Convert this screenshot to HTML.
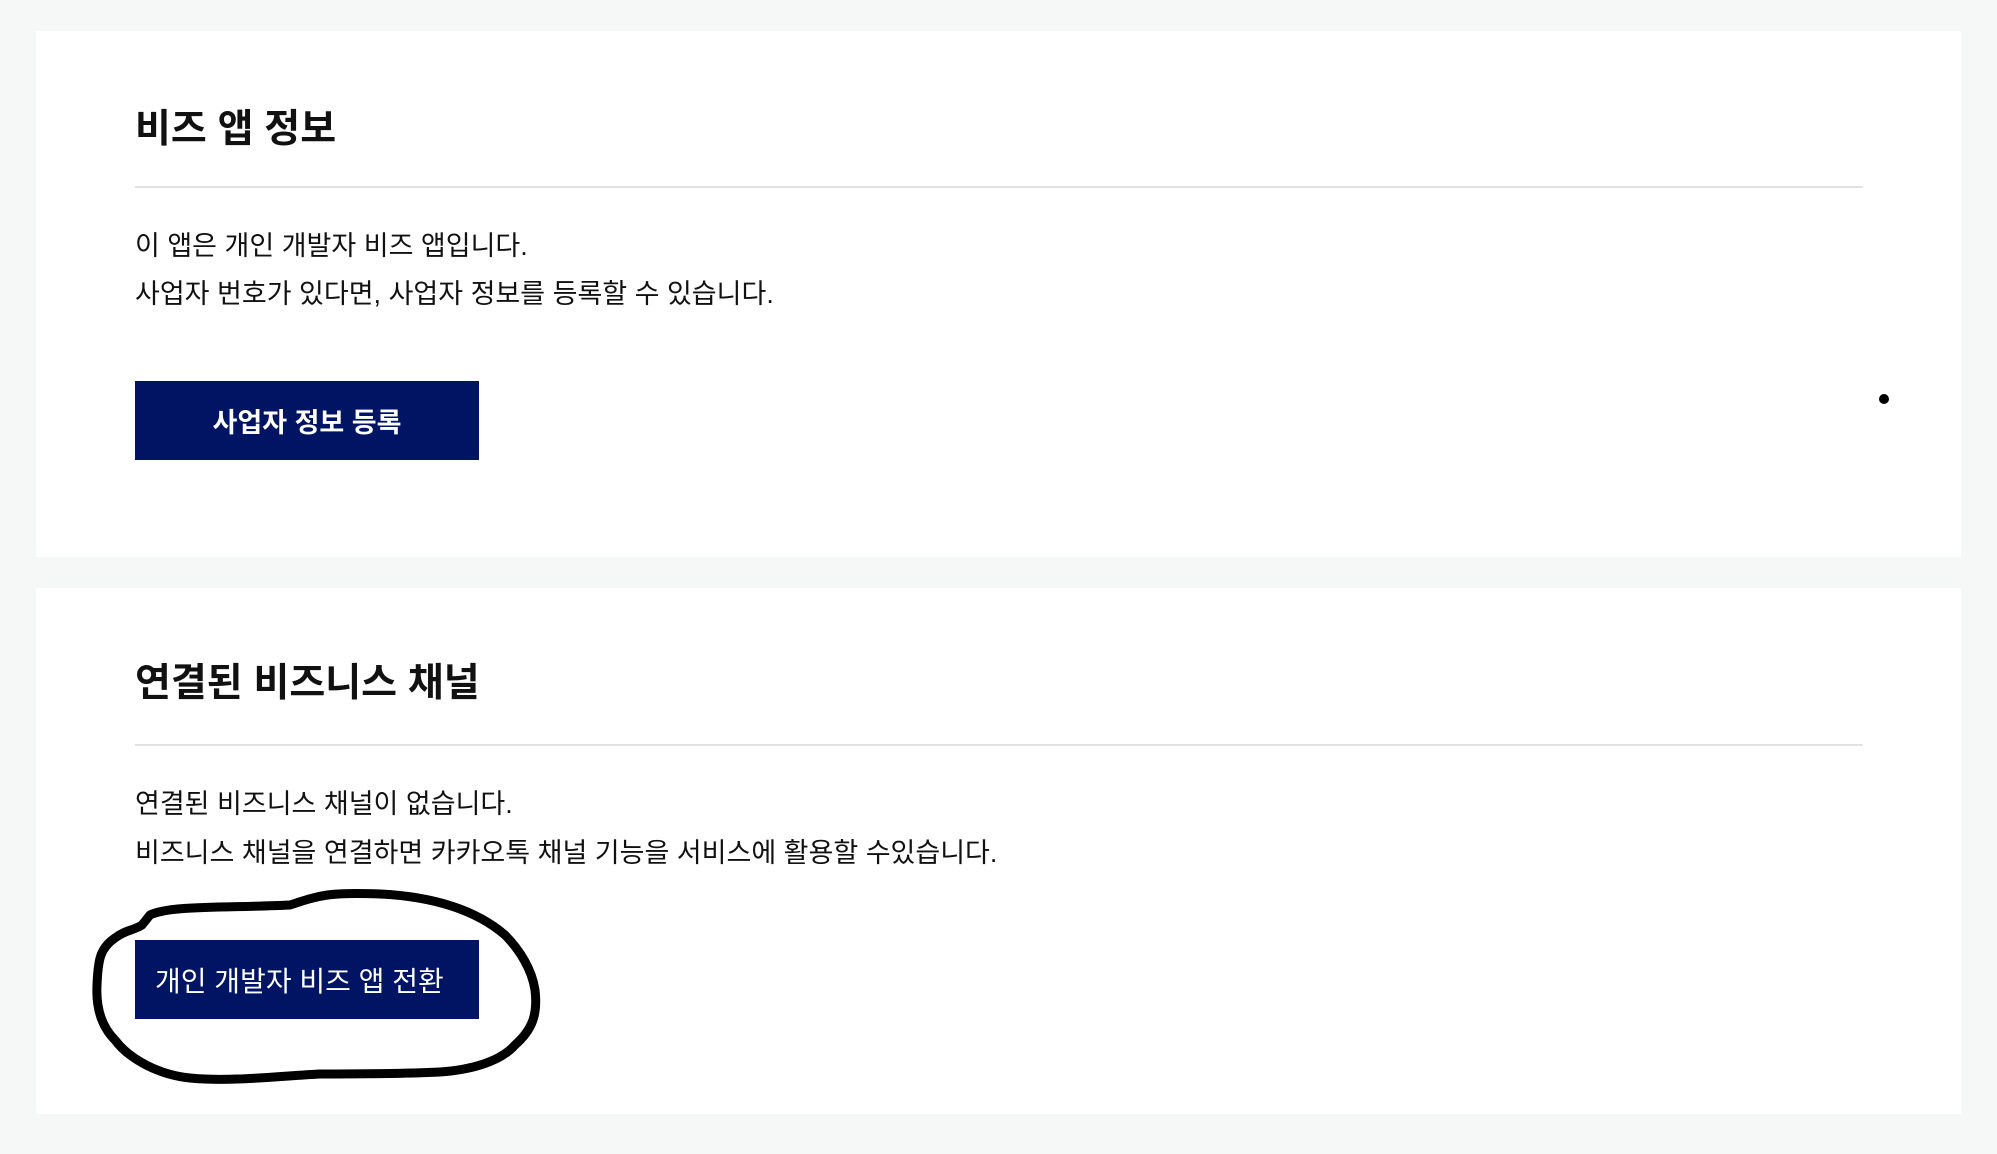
<!DOCTYPE html>
<html><head><meta charset="utf-8"><style>
body{margin:0;width:1997px;height:1154px;background:#f6f7f7;font-family:"Liberation Sans","Noto Sans CJK KR",sans-serif;position:relative;overflow:hidden;color:#111}
.card{position:absolute;left:36px;width:1925px;background:#fff}
.h{position:absolute;left:99px;font-size:39px;font-weight:bold;line-height:1;margin:0}
.hr{position:absolute;left:99px;width:1728px;height:2px;background:#e2e2e2}
.p{position:absolute;left:99px;font-size:27px;line-height:1}
.btn{position:absolute;left:99px;width:344px;height:79px;background:#001464;color:#fff;font-size:28px;display:flex;align-items:center}
</style></head><body>
<div class="card" style="top:31px;height:526px">
  <div class="h" style="top:79px">비즈 앱 정보</div>
  <div class="hr" style="top:155px"></div>
  <div class="p" style="top:202px">이 앱은 개인 개발자 비즈 앱입니다.</div>
  <div class="p" style="top:250px">사업자 번호가 있다면, 사업자 정보를 등록할 수 있습니다.</div>
  <div class="btn" style="top:350px;justify-content:center;font-weight:bold;font-size:27px">사업자 정보 등록</div>
  <div style="position:absolute;left:1843px;top:363px;width:10px;height:10px;border-radius:50%;background:#000"></div>
</div>
<div class="card" style="top:588px;height:526px">
  <div class="h" style="top:76px">연결된 비즈니스 채널</div>
  <div class="hr" style="top:156px"></div>
  <div class="p" style="top:203px">연결된 비즈니스 채널이 없습니다.</div>
  <div class="p" style="top:252px">비즈니스 채널을 연결하면 카카오톡 채널 기능을 서비스에 활용할 수있습니다.</div>
  <div class="btn" style="top:352px;padding-left:20px;box-sizing:border-box">개인 개발자 비즈 앱 전환</div>
</div>
<svg style="position:absolute;left:0;top:0" width="1997" height="1154">
<path d="M150 915 C170 905 230 908 290 905 C320 895 330 892 380 894 C420 896 470 905 505 935 C520 950 532 970 535 990 C538 1015 532 1030 515 1045 C500 1062 470 1070 440 1072 C400 1074 360 1074 320 1074 C280 1076 230 1082 190 1078 C160 1075 130 1060 115 1040 C100 1025 96 1005 97 985 C98 960 100 948 115 938 C125 930 135 930 142 925 L150 915" fill="none" stroke="#000" stroke-width="9" stroke-linejoin="round" stroke-linecap="round"/>
</svg>
</body></html>
